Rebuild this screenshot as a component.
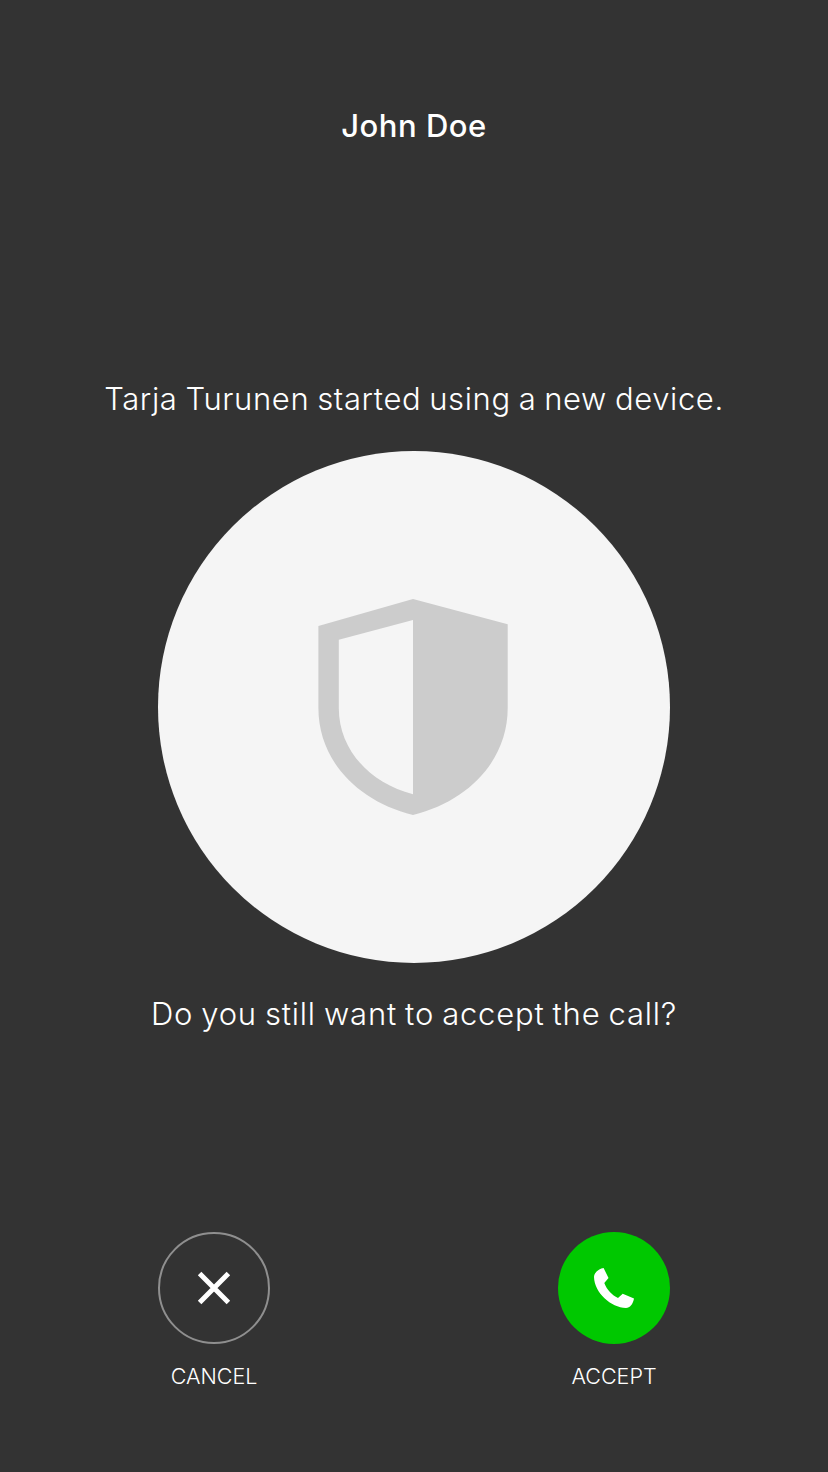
<main>
  <h1>John Doe</h1>
  <section>
    <p class="top">Tarja Turunen started using a new device.</p>
    <div class="disc">
      <svg width="190" height="218" viewBox="318 598 190 218" fill="#ccc" fill-rule="evenodd" aria-hidden="true">
        <path d="M413 598.9L507.7 624.2V708C507.7 760 469 801 413 815C357 801 318.4 760 318.4 708V626ZM413 620L338.8 639.7V708C338.8 750 370 783 413 794.2Z" />
      </svg>
    </div>
    <p class="bottom">Do you still want to accept the call?</p>
  </section>
  <div class="actions">
    <div class="action">
      <button class="cancel" aria-label="Cancel">
        <svg width="34" height="34" viewBox="0 0 34 34" fill="none" stroke="#fff" stroke-width="5"><path d="M2.6 2.6L31.4 31.4M31.4 2.6L2.6 31.4" /></svg>
      </button>
      <span class="label">CANCEL</span>
    </div>
    <div class="action">
      <button class="accept" aria-label="Accept">
        <svg width="60" height="56" viewBox="584 1260 60 56" fill="#fff"><path d="M603.6 1268C598 1269 594 1273 594 1277C594.5 1293 611 1307.5 626 1308C630 1308 633 1304 634 1298.5L622.7 1293.7L618 1298C612 1295 607 1290 604.3 1283L608.5 1278Z" /></svg>
      </button>
      <span class="label">ACCEPT</span>
    </div>
  </div>
</main>

<style>
  :global(body) { background: #333; }
  main { height: 1472px; background: #333; color: #fff; font-family: Inter, sans-serif; display: flex; flex-direction: column; align-items: center; overflow: hidden; }
  h1, p { margin: 0; white-space: nowrap; text-align: center; }
  h1 { margin-top: 106px; height: 40px; line-height: 40px; font-size: 31px; font-weight: 500; letter-spacing: .5px; }
  section { margin-top: 233px; display: flex; flex-direction: column; align-items: center; }
  p { height: 40px; line-height: 40px; font-size: 31px; font-weight: 300; }
  .top { letter-spacing: .62px; word-spacing: -1.4px; }
  .bottom { letter-spacing: .77px; word-spacing: -1.3px; }
  .disc { margin: 32px 0 31px; width: 512px; height: 512px; border-radius: 50%; background: #f5f5f5; display: flex; align-items: center; justify-content: center; }
  .disc svg { margin-right: 2px; }
  .actions { width: 512px; margin-top: 198px; display: flex; justify-content: space-between; }
  .action { width: 112px; display: flex; flex-direction: column; align-items: center; }
  button { box-sizing: border-box; width: 112px; height: 112px; border: 0; border-radius: 50%; padding: 0; display: flex; align-items: center; justify-content: center; }
  .cancel { background: transparent; border: 2px solid #8f8f8f; }
  .accept { background: #00c800; }
  .label { margin-top: 18px; line-height: 28px; font-size: 21.5px; font-weight: 300; white-space: nowrap; }
</style>
